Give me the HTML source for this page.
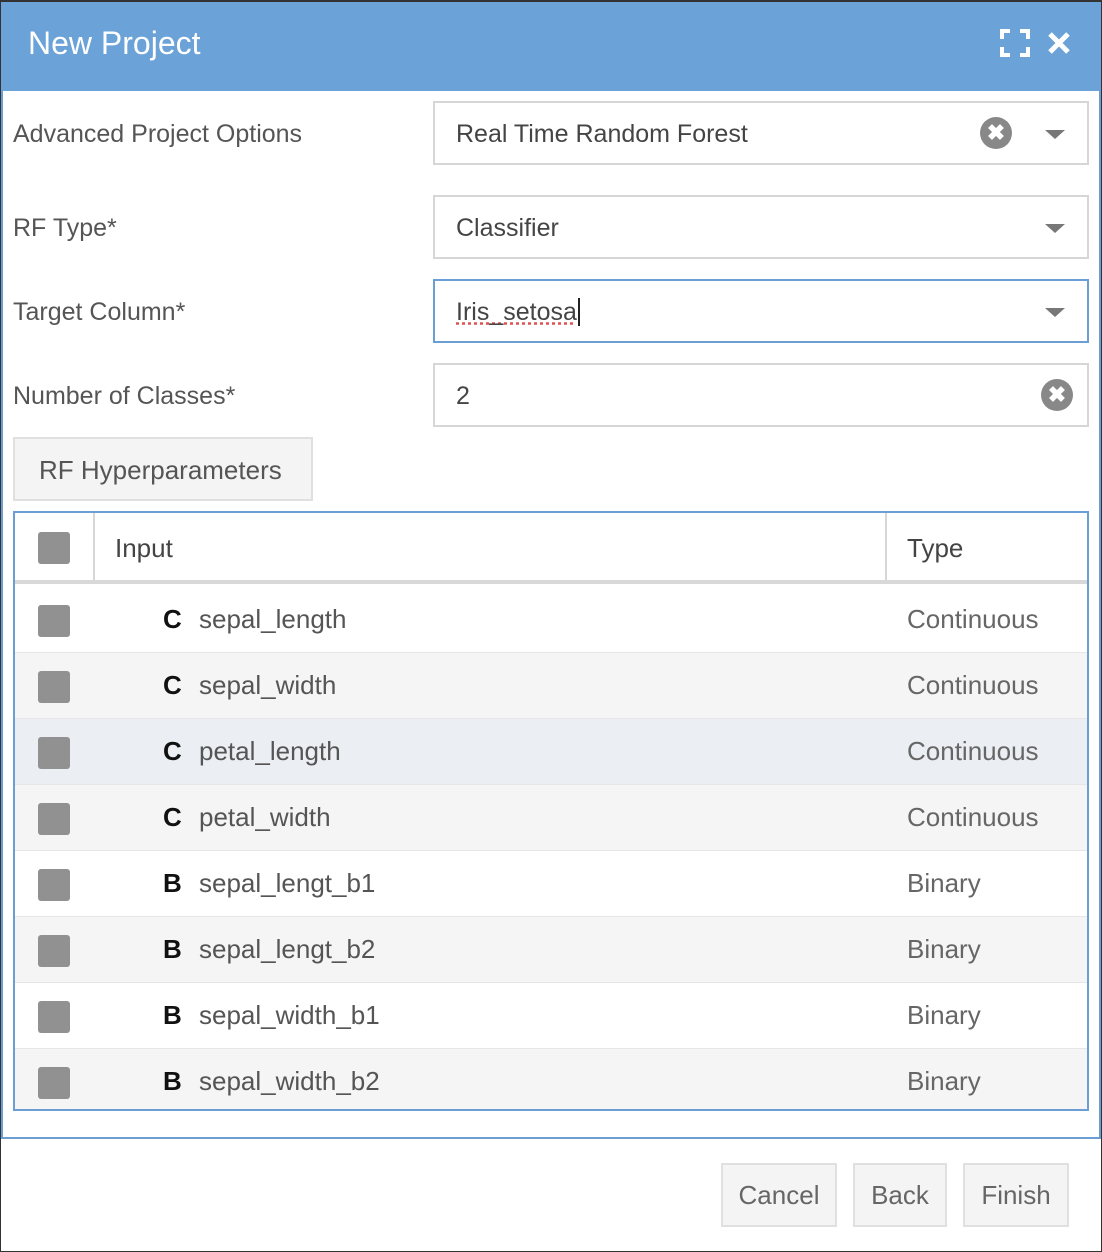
<!DOCTYPE html>
<html><head><style>
*{box-sizing:border-box;margin:0;padding:0}
body{width:1102px;height:1252px;background:#fff;font-family:"Liberation Sans",sans-serif;position:relative;overflow:hidden;color:#444}
.a{position:absolute}
.lbl{font-size:25px;color:#555;font-weight:300}
.inp{position:absolute;left:433px;width:656px;height:64px;border:2px solid #d6d6d6;background:#fff;font-size:25px;color:#444;padding:17px 0 0 21px}
.caret{position:absolute;right:22px;top:27px;width:0;height:0;border-left:10px solid transparent;border-right:10px solid transparent;border-top:9px solid #777}
.clr{position:absolute;width:32px;height:32px;border-radius:50%;background:#888;color:#fff;font-size:22px;font-weight:bold;text-align:center;line-height:32px}
.row{position:absolute;left:15px;width:1072px;height:66px;border-top:1px solid #e6e6e6}
.cb{position:absolute;left:23px;top:18px;width:32px;height:32px;background:#919191;border-radius:3px}
.ic{position:absolute;left:148px;top:17px;font-weight:bold;font-size:26px;color:#111}
.nm{position:absolute;left:184px;top:17px;font-size:26px;color:#555}
.ty{position:absolute;left:892px;top:17px;font-size:26px;color:#666}
.btn{position:absolute;top:1163px;height:64px;background:#f4f4f4;border:2px solid #e0e0e0;font-size:26px;color:#666;text-align:center;line-height:60px}
</style></head><body>
<div class="a" style="left:0;top:0;width:1102px;height:1252px;border:1px solid #333;border-top-width:2px"></div>
<div class="a" style="left:1px;top:2px;width:1100px;height:1137px;border:2px solid #6a9fd6;border-top:none"></div>
<div class="a" style="left:1px;top:2px;width:1100px;height:89px;background:#6ba2d7"></div>
<div class="a" style="left:28px;top:25px;font-size:32px;color:#fff;font-weight:300">New Project</div>
<svg class="a" style="left:1000px;top:29px" width="30" height="28"><path d="M2 10V2h8M20 2h8v8M28 18v8h-8M10 26H2v-8" stroke="#fff" stroke-width="4" fill="none"/></svg>
<svg class="a" style="left:1047px;top:31px" width="24" height="24"><path d="M3 3L21 21M21 3L3 21" stroke="#fff" stroke-width="5"/></svg>

<div class="a lbl" style="left:13px;top:120px">Advanced Project Options</div>
<div class="inp" style="top:101px">Real Time Random Forest<div class="clr" style="right:75px;top:14px">✖</div><div class="caret"></div></div>
<div class="a lbl" style="left:13px;top:214px">RF Type*</div>
<div class="inp" style="top:195px">Classifier<div class="caret"></div></div>
<div class="a lbl" style="left:13px;top:298px">Target Column*</div>
<div class="inp" style="top:279px;border-color:#6a9fd6"><span style="text-decoration:underline dotted #e05050">Iris_setosa</span><span style="border-left:2px solid #222;margin-left:1px"></span><div class="caret"></div></div>
<div class="a lbl" style="left:13px;top:382px">Number of Classes*</div>
<div class="inp" style="top:363px">2<div class="clr" style="right:14px;top:14px">✖</div></div>
<div class="a" style="left:13px;top:437px;width:300px;height:64px;background:#f4f4f4;border:2px solid #e0e0e0;font-size:26px;color:#555;padding:16px 0 0 24px">RF Hyperparameters</div>

<div class="a" style="left:13px;top:511px;width:1076px;height:600px;border:2px solid #6a9fd6;background:#fff"></div>
<div class="a" style="left:15px;top:513px;width:1072px;height:71px;border-bottom:4px solid #d8d8d8">
<div class="cb" style="top:19px"></div>
<div class="a" style="left:78px;top:0;width:2px;height:67px;background:#d6d6d6"></div>
<div class="a" style="left:100px;top:20px;font-size:26px;color:#444">Input</div>
<div class="a" style="left:870px;top:0;width:2px;height:67px;background:#d6d6d6"></div>
<div class="a" style="left:892px;top:20px;font-size:26px;color:#444">Type</div>
</div>
<div class="row" style="top:587px;background:#fff;border-top:none"><div class="cb"></div><div class="ic">C</div><div class="nm">sepal_length</div><div class="ty">Continuous</div></div>
<div class="row" style="top:652px;background:#f5f5f5"><div class="cb"></div><div class="ic">C</div><div class="nm">sepal_width</div><div class="ty">Continuous</div></div>
<div class="row" style="top:718px;background:#ebeef2"><div class="cb"></div><div class="ic">C</div><div class="nm">petal_length</div><div class="ty">Continuous</div></div>
<div class="row" style="top:784px;background:#f5f5f5"><div class="cb"></div><div class="ic">C</div><div class="nm">petal_width</div><div class="ty">Continuous</div></div>
<div class="row" style="top:850px;background:#fff"><div class="cb"></div><div class="ic">B</div><div class="nm">sepal_lengt_b1</div><div class="ty">Binary</div></div>
<div class="row" style="top:916px;background:#f5f5f5"><div class="cb"></div><div class="ic">B</div><div class="nm">sepal_lengt_b2</div><div class="ty">Binary</div></div>
<div class="row" style="top:982px;background:#fff"><div class="cb"></div><div class="ic">B</div><div class="nm">sepal_width_b1</div><div class="ty">Binary</div></div>
<div class="row" style="top:1048px;background:#f5f5f5;height:61px"><div class="cb"></div><div class="ic">B</div><div class="nm">sepal_width_b2</div><div class="ty">Binary</div></div>

<div class="btn" style="left:721px;width:116px">Cancel</div>
<div class="btn" style="left:853px;width:94px">Back</div>
<div class="btn" style="left:963px;width:106px">Finish</div>
</body></html>
